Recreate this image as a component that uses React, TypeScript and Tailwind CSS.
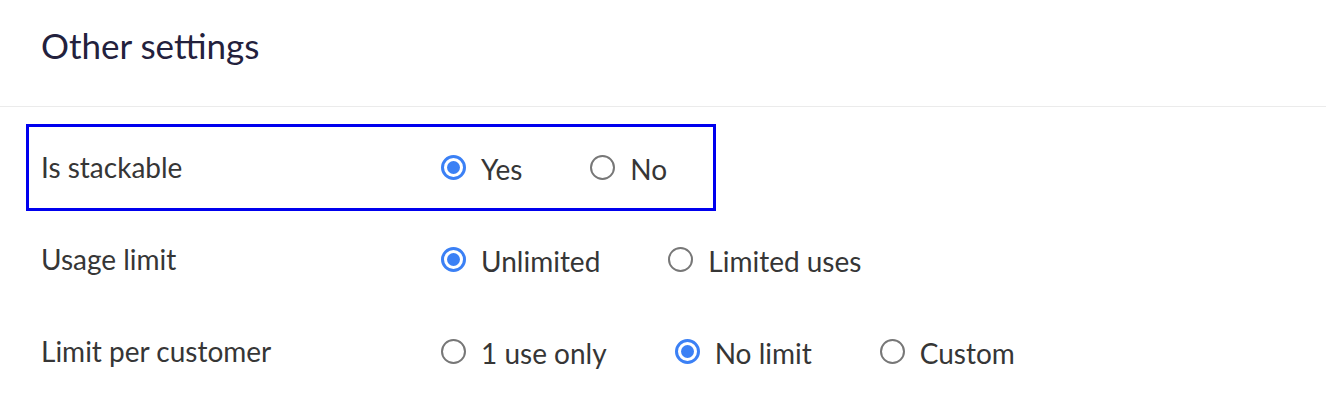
import React, { useState } from 'react';

interface Option {
  value: string;
  label: string;
}

interface Setting {
  id: string;
  label: string;
  options: Option[];
  value: string;
}

const initialSettings: Setting[] = [
  {
    id: 'stackable',
    label: 'Is stackable',
    options: [
      { value: 'yes', label: 'Yes' },
      { value: 'no', label: 'No' },
    ],
    value: 'yes',
  },
  {
    id: 'usage',
    label: 'Usage limit',
    options: [
      { value: 'unlimited', label: 'Unlimited' },
      { value: 'limited', label: 'Limited uses' },
    ],
    value: 'unlimited',
  },
  {
    id: 'customer',
    label: 'Limit per customer',
    options: [
      { value: 'once', label: '1 use only' },
      { value: 'none', label: 'No limit' },
      { value: 'custom', label: 'Custom' },
    ],
    value: 'none',
  },
];

function Radio({ checked }: { checked: boolean }) {
  return checked ? (
    <span className="flex h-[25px] w-[25px] shrink-0 items-center justify-center rounded-full border-[3px] border-[#3b80f5] bg-white">
      <span className="h-[13px] w-[13px] rounded-full bg-[#3b80f5]" />
    </span>
  ) : (
    <span className="h-[25px] w-[25px] shrink-0 rounded-full border-2 border-[#777777] bg-white" />
  );
}

function SettingRow({ setting, onChange }: { setting: Setting; onChange: (v: string) => void }) {
  return (
    <>
      <div className="mb-[2px] w-[400px] shrink-0 text-[28px] leading-none text-[#363636]">{setting.label}</div>
      <div className="flex items-center gap-[68px]">
        {setting.options.map((o) => (
          <label
            key={o.value}
            onClick={() => onChange(o.value)}
            className="flex cursor-pointer items-center gap-[15px] text-[28px] leading-none text-[#363636]"
          >
            <Radio checked={setting.value === o.value} />
            <span className="mt-[2px]">{o.label}</span>
          </label>
        ))}
      </div>
    </>
  );
}

export default function App() {
  const [settings, setSettings] = useState<Setting[]>(initialSettings);

  const update = (id: string, value: string) => {
    setSettings((prev) => prev.map((s) => (s.id === id ? { ...s, value } : s)));
  };

  return (
    <div className="min-h-[414px] w-full bg-white font-['Lato',sans-serif]">
      <div className="flex h-[107px] items-center border-b border-[#ebebeb] pb-[15px] pl-[41px]">
        <h2 className="text-[35px] leading-none text-[#23213d]">Other settings</h2>
      </div>

      <div className="flex flex-col gap-[5px] pt-[17px]">
        {settings.map((s, i) =>
          i === 0 ? (
            <div
              key={s.id}
              className="ml-[26px] flex h-[87px] w-[690px] items-center border-[3px] border-[#0000ee] pl-[12px]"
            >
              <SettingRow setting={s} onChange={(v) => update(s.id, v)} />
            </div>
          ) : (
            <div key={s.id} className="flex h-[87px] items-center pl-[41px]">
              <SettingRow setting={s} onChange={(v) => update(s.id, v)} />
            </div>
          )
        )}
      </div>
    </div>
  );
}
